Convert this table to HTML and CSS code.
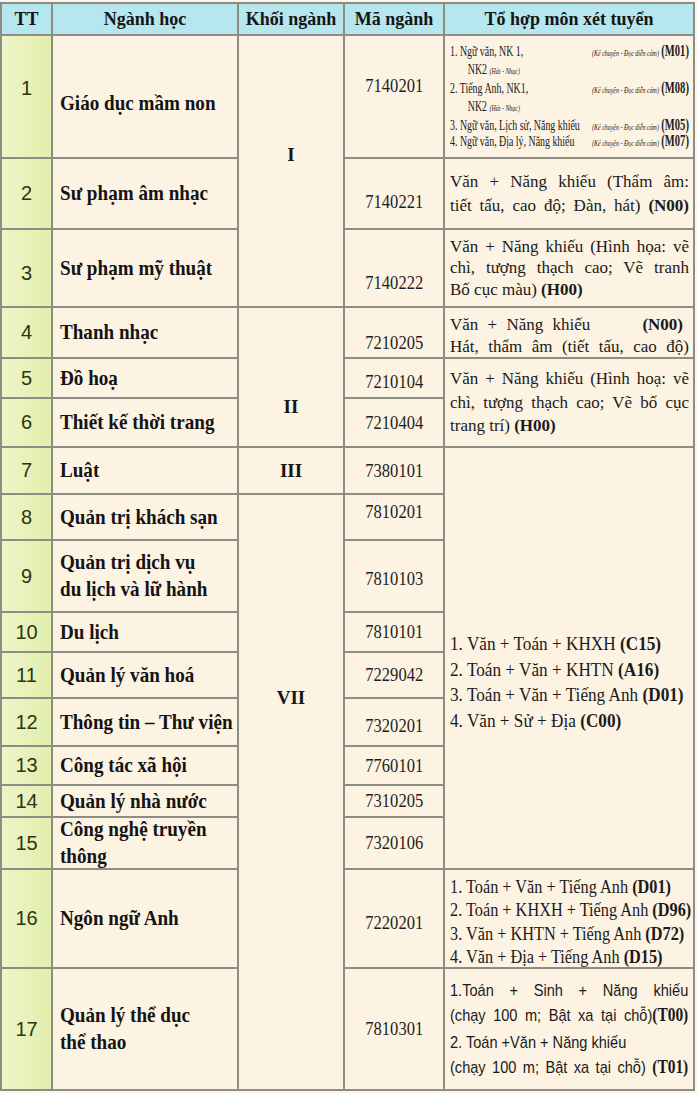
FILE: index.html
```html
<!DOCTYPE html>
<html lang="vi">
<head>
<meta charset="utf-8">
<title>Tổ hợp môn xét tuyển</title>
<link rel="stylesheet" href="styles.css">
</head>
<body>
<div class="tbl">
  <div class="hd">TT</div>
  <div class="hd">Ngành học</div>
  <div class="hd">Khối ngành</div>
  <div class="hd">Mã ngành</div>
  <div class="hd">Tổ hợp môn xét tuyển</div>

  <!-- 1 -->
  <div class="tt up8">1</div>
  <div class="nm dn7"><span class="sq">Giáo dục mầm non</span></div>
  <div class="kh k1">I</div>
  <div class="ma up11"><span class="sq">7140201</span></div>
  <div class="th r1">
    <div class="r1in">
      <div class="l1"><span>1. Ngữ văn, NK 1,</span><span><i class="tiny">(Kể chuyện - Đọc diễn cảm)</i> <span class="code">(M01)</span></span></div>
      <div class="l1 ind"><span>NK2 <i class="tiny">(Hát - Nhạc)</i></span></div>
      <div class="l1"><span>2. Tiếng Anh, NK1,</span><span><i class="tiny">(Kể chuyện - Đọc diễn cảm)</i> <span class="code">(M08)</span></span></div>
      <div class="l1 ind"><span>NK2 <i class="tiny">(Hát - Nhạc)</i></span></div>
      <div class="l1 sm"><span>3. Ngữ văn, Lịch sử, Năng khiếu</span><span><i class="tiny">(Kể chuyện - Đọc diễn cảm)</i> <span class="code">(M05)</span></span></div>
      <div class="l1 sm"><span>4. Ngữ văn, Địa lý, Năng khiếu</span><span><i class="tiny">(Kể chuyện - Đọc diễn cảm)</i> <span class="code">(M07)</span></span></div>
    </div>
  </div>

  <!-- 2 -->
  <div class="tt">2</div>
  <div class="nm"><span class="sq">Sư phạm âm nhạc</span></div>
  <div class="ma dn8"><span class="sq">7140221</span></div>
  <div class="th lh23">
    <div class="jl">Văn + Năng khiếu (Thẩm âm:</div>
    <div class="jl">tiết tấu, cao độ; Đàn, hát) <b>(N00)</b></div>
  </div>

  <!-- 3 -->
  <div class="tt dn5">3</div>
  <div class="nm"><span class="sq">Sư phạm mỹ thuật</span></div>
  <div class="ma dn15"><span class="sq">7140222</span></div>
  <div class="th lh21">
    <div class="jl">Văn + Năng khiếu (Hình họa: vẽ</div>
    <div class="jl">chì, tượng thạch cao; Vẽ tranh</div>
    <div>Bố cục màu) <b>(H00)</b></div>
  </div>

  <!-- 4 -->
  <div class="tt">4</div>
  <div class="nm"><span class="sq">Thanh nhạc</span></div>
  <div class="kh k2">II</div>
  <div class="ma dn10"><span class="sq">7210205</span></div>
  <div class="th lh21 dn3">
    <div class="split"><span class="ws">Văn + Năng khiếu</span><b class="pr">(N00)</b></div>
    <div class="jl">Hát, thẩm âm (tiết tấu, cao độ)</div>
  </div>

  <!-- 5 -->
  <div class="tt">5</div>
  <div class="nm"><span class="sq">Đồ hoạ</span></div>
  <div class="ma dn4"><span class="sq">7210104</span></div>
  <div class="th lh23 span2">
    <div class="jl">Văn + Năng khiếu (Hình hoạ: vẽ</div>
    <div class="jl">chì, tượng thạch cao; Vẽ bố cục</div>
    <div>trang trí) <b>(H00)</b></div>
  </div>

  <!-- 6 -->
  <div class="tt">6</div>
  <div class="nm"><span class="sq">Thiết kế thời trang</span></div>
  <div class="ma"><span class="sq">7210404</span></div>

  <!-- 7 -->
  <div class="tt">7</div>
  <div class="nm"><span class="sq">Luật</span></div>
  <div class="kh k3">III</div>
  <div class="ma"><span class="sq">7380101</span></div>
  <div class="th lh26 span9 list">
    <div class="cl">1. Văn + Toán + KHXH <b>(C15)</b></div>
    <div class="cl">2. Toán + Văn + KHTN <b>(A16)</b></div>
    <div class="cl">3. Toán + Văn + Tiếng Anh <b>(D01)</b></div>
    <div class="cl">4. Văn + Sử + Địa <b>(C00)</b></div>
  </div>

  <!-- 8 -->
  <div class="tt">8</div>
  <div class="nm"><span class="sq">Quản trị khách sạn</span></div>
  <div class="kh k7">VII</div>
  <div class="ma up5"><span class="sq">7810201</span></div>

  <!-- 9 -->
  <div class="tt">9</div>
  <div class="nm two"><span class="sq">Quản trị dịch vụ<br>du lịch và lữ hành</span></div>
  <div class="ma dn3"><span class="sq">7810103</span></div>

  <!-- 10 -->
  <div class="tt">10</div>
  <div class="nm"><span class="sq">Du lịch</span></div>
  <div class="ma"><span class="sq">7810101</span></div>

  <!-- 11 -->
  <div class="tt">11</div>
  <div class="nm"><span class="sq">Quản lý văn hoá</span></div>
  <div class="ma"><span class="sq">7229042</span></div>

  <!-- 12 -->
  <div class="tt">12</div>
  <div class="nm"><span class="sq">Thông tin – Thư viện</span></div>
  <div class="ma dn4"><span class="sq">7320201</span></div>

  <!-- 13 -->
  <div class="tt">13</div>
  <div class="nm"><span class="sq">Công tác xã hội</span></div>
  <div class="ma"><span class="sq">7760101</span></div>

  <!-- 14 -->
  <div class="tt">14</div>
  <div class="nm"><span class="sq">Quản lý nhà nước</span></div>
  <div class="ma"><span class="sq">7310205</span></div>

  <!-- 15 -->
  <div class="tt">15</div>
  <div class="nm two"><span class="sq">Công nghệ truyền<br>thông</span></div>
  <div class="ma"><span class="sq">7320106</span></div>

  <!-- 16 -->
  <div class="tt">16</div>
  <div class="nm"><span class="sq">Ngôn ngữ Anh</span></div>
  <div class="ma dn4"><span class="sq">7220201</span></div>
  <div class="th lh23 dn4 eng">
    <div class="cl">1. Toán + Văn + Tiếng Anh <b>(D01)</b></div>
    <div class="cl">2. Toán + KHXH + Tiếng Anh <b>(D96)</b></div>
    <div class="cl">3. Văn + KHTN + Tiếng Anh <b>(D72)</b></div>
    <div class="cl">4. Văn + Địa + Tiếng Anh <b>(D15)</b></div>
  </div>

  <!-- 17 -->
  <div class="tt">17</div>
  <div class="nm two"><span class="sq">Quản lý thể dục<br>thể thao</span></div>
  <div class="ma"><span class="sq">7810301</span></div>
  <div class="th r17">
    <div class="r17in">
      <div class="jl">1.Toán + Sinh + Năng khiếu</div>
      <div class="jl">(chạy 100 m; Bật xa tại chỗ)<b class="sb">(T00)</b></div>
      <div class="gap">2. Toán +Văn + Năng khiếu</div>
      <div class="jl">(chạy 100 m; Bật xa tại chỗ) <b class="sb">(T01)</b></div>
    </div>
  </div>
</div>
</body>
</html>
```

FILE: styles.css
```css
html, body {
  margin: 0;
  background: #fbf5ea;
}
body {
  font-family: "Liberation Serif", "Times New Roman", serif;
  color: #161616;
}
.tbl {
  margin-top: 2px;
  display: grid;
  width: max-content;
  grid-template-columns: 49px 184px 104px 98px 248px;
  grid-template-rows: 30px 121px 69px 76px 49px 38px 47px 45px 44px 70px 38px 44px 46px 37px 30px 50px 97px 120px;
  gap: 2px;
  background: #8d8c85;
  border: 2px solid #8d8c85;
}
.tbl > div {
  background: #fdf3e3;
  box-sizing: border-box;
  overflow: hidden;
}
.tbl > .hd {
  background: #b6e6ee;
  display: flex;
  align-items: center;
  justify-content: center;
  font-weight: bold;
  font-size: 18px;
  color: #151515;
}
.tbl > .tt {
  background: linear-gradient(to right, #eef5c9, #e2eeac);
  display: flex;
  align-items: center;
  justify-content: center;
  font-family: "Liberation Sans", Arial, sans-serif;
  font-size: 20px;
  color: #2b3610;
}
.nm {
  display: flex;
  align-items: center;
  padding-left: 7px;
  font-weight: bold;
  font-size: 21px;
  line-height: 27px;
  white-space: nowrap;
  color: #141414;
}
.nm .sq {
  display: inline-block;
  transform: scaleX(0.91);
  transform-origin: 0 50%;
}
.kh {
  display: flex;
  justify-content: center;
  align-items: flex-start;
  font-weight: bold;
  font-size: 19px;
  line-height: 22px;
}
.k1, .k2 { grid-row: span 3; }
.k1 { padding-top: 108px; }
.k2 { padding-top: 88px; }
.k3 { align-items: center; }
.k7 { grid-row: span 10; padding-top: 192px; }
.ma {
  display: flex;
  align-items: center;
  justify-content: center;
  font-size: 19px;
  color: #1c1c1c;
}
.ma .sq {
  display: inline-block;
  transform: scaleX(0.87);
}
.th {
  padding: 0 4px 0 5px;
  font-size: 17px;
  display: flex;
  flex-direction: column;
  justify-content: center;
  color: #1a1a1a;
}
.span2 { grid-row: span 2; }
.span9 { grid-row: span 9; }
.lh21 { line-height: 21.5px; }
.lh23 { line-height: 23.5px; }
.lh26 { line-height: 25.7px; }
.jl {
  text-align: justify;
  text-align-last: justify;
}
.split {
  display: flex;
  justify-content: space-between;
}
.ws { word-spacing: 5px; }
.pr { padding-right: 6px; }
.cl {
  white-space: nowrap;
  transform: scaleX(0.93);
  transform-origin: 0 50%;
}
.list {
  justify-content: flex-start;
  padding-top: 184px;
  font-size: 18.5px;
}
.eng { font-size: 18.5px; }
.eng .cl { transform: scaleX(0.88); }

/* vertical nudges */
.up5 { padding-bottom: 10px; }
.up8 { padding-bottom: 16px; }
.up11 { padding-bottom: 22px; }
.dn3 { padding-top: 6px; }
.dn4 { padding-top: 8px; }
.dn5 { padding-top: 10px; }
.dn7 { padding-top: 14px; }
.dn8 { padding-top: 16px; }
.dn10 { padding-top: 20px; }
.dn15 { padding-top: 30px; }

/* row 1 condensed block */
.r1 {
  justify-content: flex-start;
  padding-top: 7px;
}
.r1in {
  width: 362px;
  transform: scaleX(0.66);
  transform-origin: 0 0;
  font-size: 15px;
}
.l1 {
  display: flex;
  justify-content: space-between;
  align-items: baseline;
  height: 18.5px;
  line-height: 18.5px;
  white-space: nowrap;
}
.l1 span, .l1 i { line-height: 1; }
.l1.sm { height: 15.5px; line-height: 15.5px; }
.ind { padding-left: 27px; }
.tiny { font-size: 9px; }
.code {
  font-size: 16px;
  font-weight: bold;
}

/* row 17 sans block */
.r17 { justify-content: center; }
.r17in {
  width: 278px;
  transform: scaleX(0.857);
  transform-origin: 0 0;
  font-family: "Liberation Sans", Arial, sans-serif;
  font-size: 17px;
  line-height: 24px;
}
.gap { margin-top: 3px; }
.sb {
  font-family: "Liberation Serif", "Times New Roman", serif;
  font-size: 18px;
}
```
